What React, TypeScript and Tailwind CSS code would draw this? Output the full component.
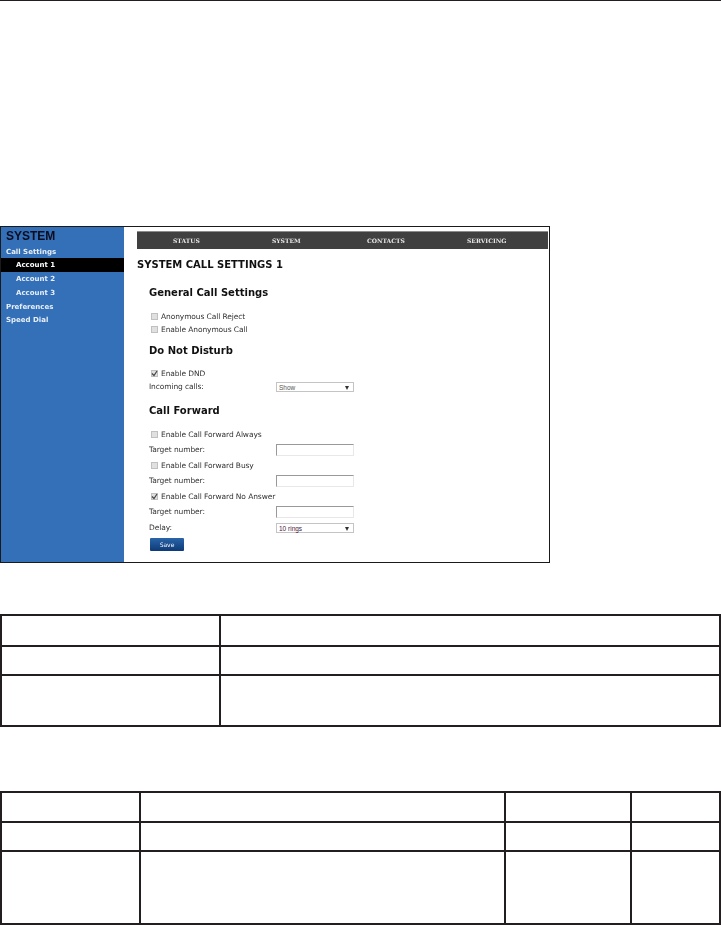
const FONT = "font-['DejaVu_Sans',sans-serif]";

function Check({ checked }: { checked?: boolean }) {
  return (
    <span className="w-[7px] h-[7px] -mt-[1px] border border-[#c0c0c0] bg-[#e0e0e0] flex items-center justify-center shrink-0">
      {checked && (
        <svg width="7" height="7" viewBox="0 0 7 7" className="shrink-0">
          <path d="M1 3.5 L3 5.5 L6 1" fill="none" stroke="#444" strokeWidth="1.2" />
        </svg>
      )}
    </span>
  );
}

function CheckRow({ label, checked }: { label: string; checked?: boolean }) {
  return (
    <div className="flex items-center ml-[2px] h-[13px] text-[7.5px] tracking-[-0.1px] text-[#333]">
      <Check checked={checked} />
      <span className="ml-[3px]">{label}</span>
    </div>
  );
}

function Arrow() {
  return (
    <svg width="4" height="4" viewBox="0 0 4 4" className="absolute right-[4px] top-[3px]">
      <path d="M0 0 H4 L2 4 Z" fill="#333" />
    </svg>
  );
}

function FieldRow({ label, children }: { label: string; children: React.ReactNode }) {
  return (
    <div className="flex items-center h-[13px] text-[7.5px] tracking-[-0.1px] text-[#333]">
      <span className="w-[127px] shrink-0">{label}</span>
      {children}
    </div>
  );
}

function TextField() {
  return <div className="w-[78px] h-[12px] border border-[#e8e8e8] border-t-[#999] border-l-[#999] bg-white" />;
}

function Select({ value, purple }: { value: string; purple?: boolean }) {
  return (
    <div className={`relative w-[78px] h-[10px] border border-[#c4c4c4] bg-white text-[6.5px] leading-[9px] tracking-normal pl-[2px] font-['Liberation_Sans',sans-serif] ${purple ? "text-[#4a2040]" : "text-[#555]"}`}>
      {value}
      <Arrow />
    </div>
  );
}

function Heading({ children, className = "" }: { children: React.ReactNode; className?: string }) {
  return <h3 className={`text-[10px] leading-[14px] font-bold text-[#111] ${className}`}>{children}</h3>;
}

function WebUi() {
  return (
    <div className={`mt-[225px] w-[550px] h-[337px] border border-[#1a1a1a] flex bg-white ${FONT}`}>
      <aside className="w-[123px] shrink-0 bg-[#3470b7] text-white text-[7px] font-bold blur-[0.3px]">
        <div className="h-[18px] pl-[5px] pt-[2px] text-[12px] leading-[14px] font-['Liberation_Sans',sans-serif] text-[#0c0c20]">SYSTEM</div>
        <div className="h-[13px] pl-[5px] pt-[2px] flex items-center text-[#e8eff8]">Call Settings</div>
        <div className="h-[14px] pl-[15px] pt-[1px] flex items-center bg-black">Account 1</div>
        <div className="h-[14px] pl-[15px] pt-[1px] flex items-center text-[#e8eff8]">Account 2</div>
        <div className="h-[14px] pl-[15px] pt-[1px] flex items-center text-[#e8eff8]">Account 3</div>
        <div className="h-[13.5px] pl-[5px] flex items-center text-[#e8eff8]">Preferences</div>
        <div className="h-[13.5px] pl-[5px] flex items-center text-[#e8eff8]">Speed Dial</div>
      </aside>
      <main className="flex-1 min-w-0 pl-[13px] pr-[1px] pt-[4px] blur-[0.3px]">
        <nav className="h-[18px] bg-[#404040] border-t border-t-[#8c8c8c] flex items-center text-[6px] font-bold text-[#e8e8e8] font-['DejaVu_Serif',serif]">
          <span className="ml-[36px] w-[99px]">STATUS</span>
          <span className="w-[95px]">SYSTEM</span>
          <span className="w-[100px]">CONTACTS</span>
          <span>SERVICING</span>
        </nav>
        <h2 className="mt-[10px] text-[10px] leading-[12px] font-bold text-[#111]">SYSTEM CALL SETTINGS 1</h2>
        <div className="ml-[12px] mt-[15px]">
          <Heading>General Call Settings</Heading>
          <div className="mt-[10px] flex flex-col">
            <CheckRow label="Anonymous Call Reject" />
            <CheckRow label="Enable Anonymous Call" />
          </div>
          <Heading className="mt-[8px]">Do Not Disturb</Heading>
          <div className="mt-[9px] flex flex-col">
            <CheckRow label="Enable DND" checked />
            <FieldRow label="Incoming calls:">
              <Select value="Show" />
            </FieldRow>
          </div>
          <Heading className="mt-[11px]">Call Forward</Heading>
          <div className="mt-[10px] flex flex-col gap-[2.5px]">
            <CheckRow label="Enable Call Forward Always" />
            <FieldRow label="Target number:"><TextField /></FieldRow>
            <CheckRow label="Enable Call Forward Busy" />
            <FieldRow label="Target number:"><TextField /></FieldRow>
            <CheckRow label="Enable Call Forward No Answer" checked />
            <FieldRow label="Target number:"><TextField /></FieldRow>
            <FieldRow label="Delay:">
              <Select value="10 rings" purple />
            </FieldRow>
          </div>
          <button className="mt-[4px] ml-[1px] block w-[34px] h-[13px] rounded-[1px] bg-gradient-to-b from-[#2a64a8] to-[#0d3a78] text-white text-[6px] leading-[13px]">
            Save
          </button>
        </div>
      </main>
    </div>
  );
}

function SpecTable({ cols, rows, className }: { cols: string; rows: number[]; className: string }) {
  const n = cols === "two" ? 2 : 4;
  const grid = cols === "two" ? "grid-cols-[219px_1fr]" : "grid-cols-[139px_365px_126px_1fr]";
  const cells: React.ReactNode[] = [];
  rows.forEach((h, r) => {
    for (let c = 0; c < n; c++) {
      cells.push(
        <div
          key={`${r}-${c}`}
          style={{ height: h }}
          className={`border-[#231f20] ${c < n - 1 ? "border-r-2" : ""} ${r < rows.length - 1 ? "border-b-2" : ""}`}
        />
      );
    }
  });
  return <div className={`grid ${grid} w-[721px] border-2 border-[#231f20] ${className}`}>{cells}</div>;
}

export default function App() {
  return (
    <div className="w-[721px] h-[925px] bg-white overflow-hidden">
      <div className="h-px bg-[#231f20]" />
      <WebUi />
      <SpecTable cols="two" rows={[31, 29, 49]} className="mt-[51px]" />
      <SpecTable cols="four" rows={[30, 29, 71]} className="mt-[64px]" />
    </div>
  );
}
